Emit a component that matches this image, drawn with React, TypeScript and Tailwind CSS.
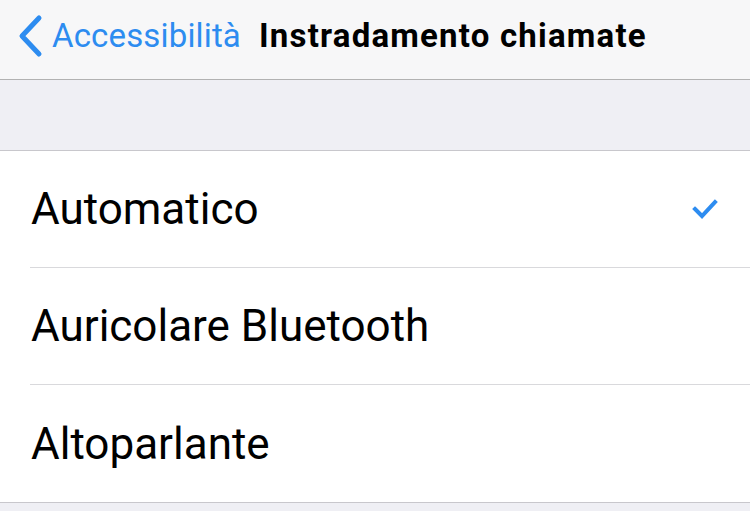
const rows = [
  { label: 'Automatico', checked: true },
  { label: 'Auricolare Bluetooth', checked: false },
  { label: 'Altoparlante', checked: false },
]

export default function App() {
  return (
    <div className="w-[750px] h-[511px] overflow-hidden bg-[#efeff4] font-['Roboto',sans-serif]">
      {/* Nav bar */}
      <div className="h-[80px] bg-[#f7f7f8] border-b border-[#b2b2b2] flex items-center">
        <div className="flex items-center pl-[17px] pb-[7px]">
          <svg width="26" height="44" viewBox="0 0 26 44" className="mr-[9px]">
            <path d="M22 4 L5 22 L22 40" fill="none" stroke="#2d8cf0" strokeWidth="5" strokeLinecap="round" strokeLinejoin="round" />
          </svg>
          <span className="text-[#2d8cf0] text-[33px] tracking-[0.15px]">Accessibilità</span>
          <span className="ml-[18px] text-black text-[33px] font-bold tracking-[1.2px]">Instradamento chiamate</span>
        </div>
      </div>

      {/* Spacer section */}
      <div className="h-[70px]" />

      {/* List */}
      <div className="bg-white border-y border-[#c8c7cc]">
        {rows.map((r, i) => (
          <div key={r.label} className="pl-[30px]">
            <div className={`h-[117px] flex items-center pr-[32px] ${i < rows.length - 1 ? 'border-b border-[#d9d9dc]' : ''}`}>
              <span className="flex-1 text-[44px] text-black pl-[1px]">{r.label}</span>
              {r.checked && (
                <svg width="26" height="22" viewBox="0 0 26 22">
                  <path d="M3 11 L10 18 L23 4" fill="none" stroke="#2d8cf0" strokeWidth="4" strokeLinecap="square" />
                </svg>
              )}
            </div>
          </div>
        ))}
      </div>
    </div>
  )
}
